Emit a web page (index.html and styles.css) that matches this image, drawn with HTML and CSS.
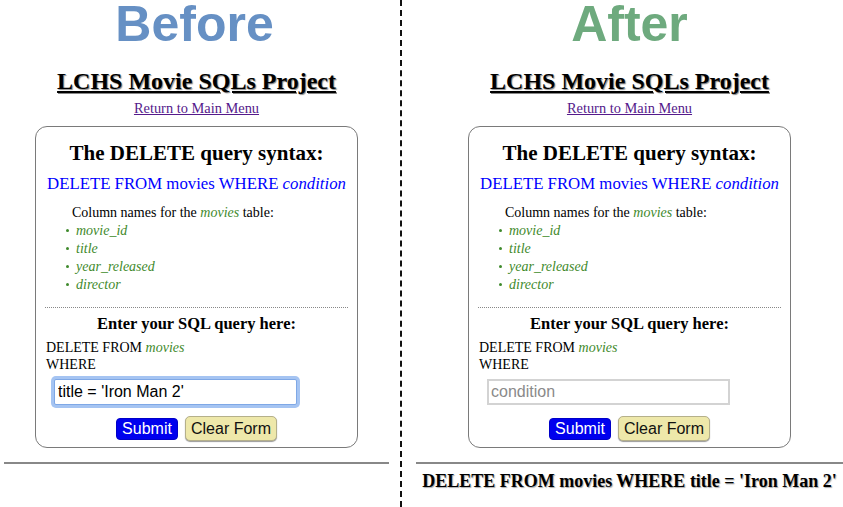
FILE: index.html
```html
<!DOCTYPE html>
<html>
<head>
<meta charset="utf-8">
<link rel="stylesheet" href="styles.css">
</head>
<body>
<div class="page">
  <section class="panel">
    <div class="label label-before">Before</div>
    <h1 class="title">LCHS Movie SQLs Project</h1>
    <div class="menu"><a href="#">Return to Main Menu</a></div>
    <div class="card">
      <h2 class="syntax-head">The DELETE query syntax:</h2>
      <p class="syntax">DELETE FROM movies WHERE <i>condition</i></p>
      <p class="cols">Column names for the <i class="green">movies</i> table:</p>
      <ul class="collist">
        <li>movie_id</li>
        <li>title</li>
        <li>year_released</li>
        <li>director</li>
      </ul>
      <div class="dots"></div>
      <h3 class="enter">Enter your SQL query here:</h3>
      <div class="sqlline">DELETE FROM <i class="green">movies</i></div>
      <div class="sqlline">WHERE</div>
      <div class="inputrow"><input class="cond focused" type="text" value="title = 'Iron Man 2'"></div>
      <div class="buttons">
        <button class="btn submit">Submit</button>
        <button class="btn clear">Clear Form</button>
      </div>
    </div>
    <div class="rule"></div>
  </section>
  <div class="divider"></div>
  <section class="panel panel-after">
    <div class="label label-after">After</div>
    <h1 class="title">LCHS Movie SQLs Project</h1>
    <div class="menu"><a href="#">Return to Main Menu</a></div>
    <div class="card">
      <h2 class="syntax-head">The DELETE query syntax:</h2>
      <p class="syntax">DELETE FROM movies WHERE <i>condition</i></p>
      <p class="cols">Column names for the <i class="green">movies</i> table:</p>
      <ul class="collist">
        <li>movie_id</li>
        <li>title</li>
        <li>year_released</li>
        <li>director</li>
      </ul>
      <div class="dots"></div>
      <h3 class="enter">Enter your SQL query here:</h3>
      <div class="sqlline">DELETE FROM <i class="green">movies</i></div>
      <div class="sqlline">WHERE</div>
      <div class="inputrow"><input class="cond" type="text" placeholder="condition"></div>
      <div class="buttons">
        <button class="btn submit">Submit</button>
        <button class="btn clear">Clear Form</button>
      </div>
    </div>
    <div class="rule"></div>
    <p class="result">DELETE FROM movies WHERE title = 'Iron Man 2'</p>
  </section>
</div>
</body>
</html>
```
FILE: styles.css
```css
* { box-sizing: border-box; }
html, body { margin: 0; padding: 0; background: #fff; }
body {
  font-family: "Liberation Serif", "Times New Roman", serif;
  color: #000;
  width: 843px;
  height: 507px;
  overflow: hidden;
}
.page {
  display: flex;
  height: 507px;
}
.panel {
  width: 385px;
  margin-left: 4px;
  display: flex;
  flex-direction: column;
  align-items: center;
}
.panel-after {
  width: 427px;
  margin-left: 14px;
}
.divider {
  margin-left: 11px;
  width: 0;
  border-left: 2px dashed #111;
  height: 507px;
}
.label {
  font-family: "Liberation Sans", Arial, sans-serif;
  font-weight: bold;
  font-size: 50px;
  line-height: 46px;
  height: 46px;
  padding-top: 1px;
}
.label-before { color: #6690c4; margin-right: 4px; }
.label-after { color: #6eaa7e; }
.title {
  margin: 21px 0 0;
  font-size: 24px;
  line-height: 28px;
  font-weight: bold;
  text-decoration: underline;
  text-shadow: 1px 1px 1px #888;
}
.menu {
  margin-top: 5px;
  font-size: 14.4px;
  line-height: 17px;
}
.menu a { color: #551a8b; }
.card {
  margin-top: 9px;
  width: 323px;
  border: 1px solid #7a7a7a;
  border-radius: 12px;
  padding: 14px 10px 6px;
  display: flex;
  flex-direction: column;
}
.syntax-head {
  margin: 0;
  text-align: center;
  font-size: 21px;
  line-height: 24px;
  font-weight: bold;
}
.syntax {
  margin: 9px -4px 0;
  color: #0000ff;
  font-size: 16.8px;
  line-height: 20px;
  text-align: center;
  white-space: nowrap;
}
.cols {
  margin: 10px 0 0 26px;
  font-size: 14px;
  line-height: 18px;
}
.green { color: #3f8a2c; }
.collist {
  list-style: none;
  margin: 0;
  padding: 0 0 0 20px;
  font-size: 14px;
  line-height: 18px;
  font-style: italic;
  color: #3f8a2c;
}
.collist li::before {
  content: "";
  display: inline-block;
  width: 3px;
  height: 3px;
  border-radius: 50%;
  background: #3f8a2c;
  vertical-align: middle;
  margin: 0 7px 2px 0;
}
.dots {
  margin: 13px -1px 0 -1px;
  border-top: 1px dotted #888;
}
.enter {
  margin: 6px 0 0;
  text-align: center;
  font-size: 16.5px;
  line-height: 19px;
  font-weight: bold;
}
.sqlline {
  font-size: 14px;
  line-height: 17px;
}
.enter + .sqlline { margin-top: 6px; }
.inputrow {
  margin-top: 6px;
  padding-left: 8px;
}
.cond {
  width: 243px;
  height: 26px;
  border: 2px solid #d3d3d3;
  padding: 0 2px;
  font-family: "Liberation Sans", Arial, sans-serif;
  font-size: 16px;
  color: #000;
  outline: none;
  background: #fff;
}
.cond::placeholder { color: #8a8a8a; }
.cond.focused {
  border: 1px solid #7fa8e6;
  box-shadow: 0 0 0 3px #a5c4f2;
  border-radius: 2px;
  padding: 0 3px;
}
.buttons {
  margin-top: 11px;
  display: flex;
  justify-content: center;
  align-items: center;
  gap: 7px;
}
.btn {
  font-family: "Liberation Sans", Arial, sans-serif;
  font-size: 16px;
  margin: 0;
  cursor: pointer;
}
.submit {
  background: #0000ee;
  color: #fff;
  border: 1px solid #0000c8;
  border-radius: 4px;
  height: 22px;
  width: 62px;
  padding: 0;
  line-height: 20px;
}
.clear {
  background: #eee8aa;
  color: #111;
  border: 1px solid #b5b08a;
  border-radius: 5px;
  height: 25px;
  width: 92px;
  padding: 0;
  line-height: 23px;
  box-shadow: 0 1px 1px #999;
}
.rule {
  align-self: stretch;
  margin-top: 14px;
  border-top: 2px solid #888;
}
.result {
  margin: 7px 0 0;
  font-size: 18px;
  line-height: 20px;
  font-weight: bold;
  text-shadow: 1px 1px 1px #aaa;
  white-space: nowrap;
}
```
